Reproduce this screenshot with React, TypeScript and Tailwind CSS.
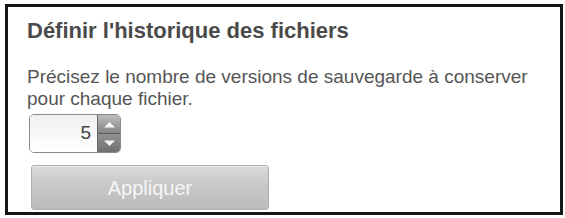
import { useState } from 'react'

export default function App() {
  const [versions, setVersions] = useState(5)

  return (
    <div className="w-[565px] h-[218px] bg-white pt-[4px] pl-[5px] font-['Liberation_Sans',Arial,sans-serif]">
      <div className="w-[558px] h-[211px] border-[3px] border-[#161616] bg-white pl-[19px] pt-[11px]">
        {/* Title */}
        <h1 className="text-[22px] leading-[26px] font-bold text-[#4a4a4a]">
          Définir l'historique des fichiers
        </h1>

        {/* Description */}
        <p className="mt-[22px] text-[19px] leading-[22px] text-[#555] w-[520px]">
          Précisez le nombre de versions de sauvegarde à conserver pour chaque fichier.
        </p>

        {/* Spinner */}
        <div className="mt-[4px] ml-[2px] flex w-[92px] h-[39px] rounded-[5px] border border-[#8a8a8a] overflow-hidden bg-white">
          <div className="flex-1 flex items-center justify-end pr-[6px] text-[19px] text-[#444] bg-gradient-to-b from-[#f0f0f0] to-white">
            {versions}
          </div>
          <div className="w-[23px] flex flex-col border-l border-[#6a6a6a]">
            <button
              onClick={() => setVersions((v) => v + 1)}
              className="flex-1 flex items-center justify-center bg-gradient-to-b from-[#bdbdbd] to-[#858585] border-b border-[#5a5a5a]"
            >
              <svg width="13" height="7" viewBox="0 0 13 7">
                <path d="M1 6.5 L6.5 1 L12 6.5 Z" fill="#f6f6f6" />
              </svg>
            </button>
            <button
              onClick={() => setVersions((v) => Math.max(1, v - 1))}
              className="flex-1 flex items-center justify-center bg-gradient-to-b from-[#939393] to-[#6f6f6f]"
            >
              <svg width="13" height="7" viewBox="0 0 13 7">
                <path d="M1 0.5 L6.5 6 L12 0.5 Z" fill="#f6f6f6" />
              </svg>
            </button>
          </div>
        </div>

        {/* Apply */}
        <button
          disabled
          className="mt-[12px] ml-[4px] w-[238px] h-[45px] rounded-[3px] border border-[#b0b0b0] bg-gradient-to-b from-[#dadada] via-[#c6c6c6] to-[#bcbcbc] text-[20px] text-[#f6f6f6] shadow-[inset_0_1px_0_#eee]"
        >
          Appliquer
        </button>
      </div>
    </div>
  )
}
